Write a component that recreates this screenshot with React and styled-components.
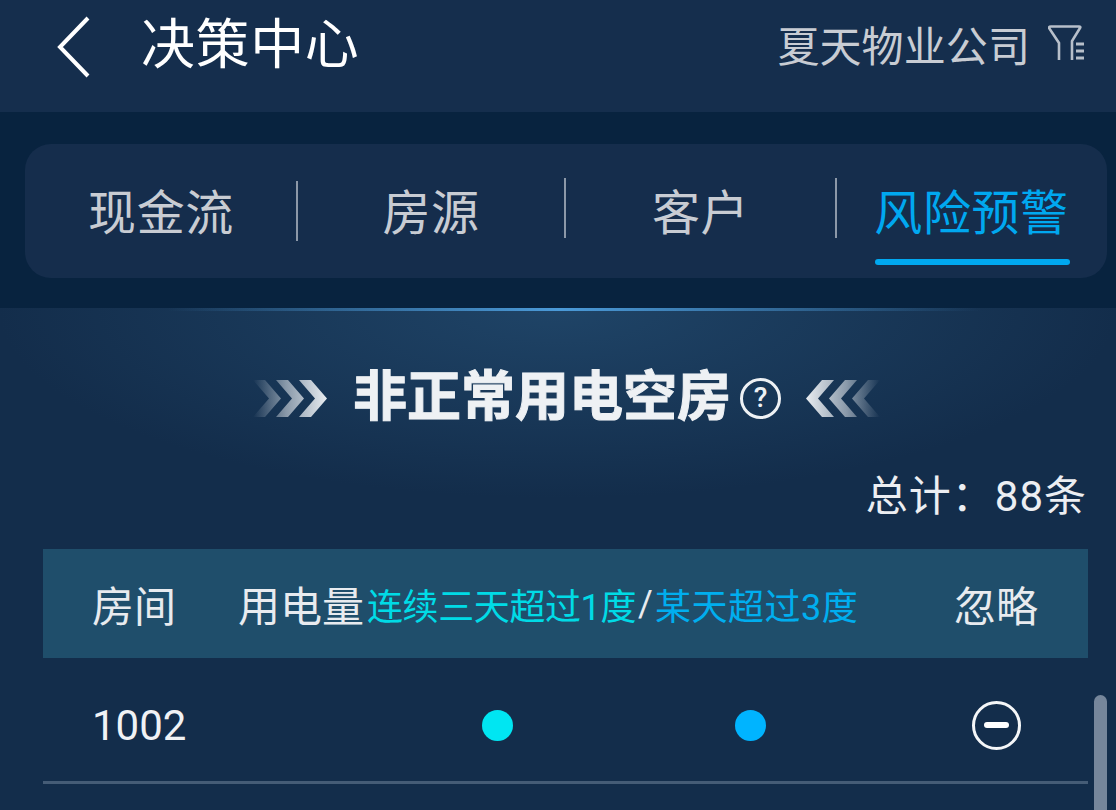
import React from 'react';
import styled, { createGlobalStyle } from 'styled-components';

const GlobalStyle = createGlobalStyle`
  html, body {
    margin: 0;
    padding: 0;
    background: #132d4b;
  }
  body {
    font-family: Roboto, "Noto Sans CJK SC", "Noto Sans", sans-serif;
    font-weight: 400;
  }
`;

const tabs = [
  { name: '现金流', width: 272, lineTop: 3 },
  { name: '房源', width: 268, lineTop: 0 },
  { name: '客户', width: 271, lineTop: 0 },
  { name: '风险预警', width: 271, active: true },
];

const Chevrons = ({ flip }) => {
  const id = flip ? 'fadeRight' : 'fadeLeft';
  return (
    <ChevronSvg viewBox="0 0 74 37" $flip={flip}>
      <defs>
        <linearGradient id={id} x1="0" x2="1" y1="0" y2="0">
          <stop offset="0" stopColor="#e8ecf0" stopOpacity="0" />
          <stop offset="0.45" stopColor="#e8ecf0" stopOpacity="0.55" />
          <stop offset="1" stopColor="#e8ecf0" stopOpacity="1" />
        </linearGradient>
      </defs>
      <path
        fill={`url(#${id})`}
        d="M0 0h12l16 18.5L12 37H0l16-18.5zM23 0h12l16 18.5L35 37H23l16-18.5zM46 0h12l16 18.5L58 37H46l16-18.5z"
      />
    </ChevronSvg>
  );
};

const App = () => {
  return (
    <Page>
      <GlobalStyle />
      <Header>
        <HeaderLeft>
          <svg width="36" height="64" viewBox="0 0 36 64" fill="none">
            <path d="M32 3 L4 32 L32 61" stroke="#fff" strokeWidth="4" />
          </svg>
          <Title>决策中心</Title>
        </HeaderLeft>
        <HeaderRight>
          <Company>夏天物业公司</Company>
          <FilterIcon viewBox="0 0 36 38" fill="none" stroke="#b7bfca" strokeWidth="2.6">
            <path d="M11 35 V18 L1 3 Q1 1.500 3 1.500 H31 Q33 1.500 32 3 L24 16 V35" />
            <path strokeWidth="3" d="M28 19 H36 M28 26 H36 M28 33 H36" />
          </FilterIcon>
        </HeaderRight>
      </Header>

      <TabBand>
        <TabCard>
          {tabs.map((tab) => (
            <Tab key={tab.name} $width={tab.width}>
              <TabLabel $active={tab.active}>{tab.name}</TabLabel>
              {!tab.active && <TabLine $top={tab.lineTop} />}
            </Tab>
          ))}
        </TabCard>
      </TabBand>

      <Panel>
        <SectionTitle>
          <Chevrons />
          <SectionText>非正常用电空房</SectionText>
          <Help>?</Help>
          <Chevrons flip />
        </SectionTitle>

        <Total>总计：88条</Total>

        <Table>
          <HeadRow>
            <RoomHead>房间</RoomHead>
            <UsageHead>
              用电量
              <Hint $color="#00dbe6" $left={3} $spacing={-0.4}>连续三天超过1度</Hint>
              <Slash>/</Slash>
              <Hint $color="#00aeef" $spacing={0.5}>某天超过3度</Hint>
            </UsageHead>
            <IgnoreHead>忽略</IgnoreHead>
          </HeadRow>
          <Row>
            <RoomCell>1002</RoomCell>
            <Dot $color="#00e6f2" />
            <Dot $color="#00b4ff" />
            <IgnoreButton />
          </Row>
        </Table>
        <ScrollThumb />
      </Panel>
    </Page>
  );
};

export default App;

const Page = styled.div`
  width: 1116px;
  height: 810px;
  overflow: hidden;
  display: flex;
  flex-direction: column;
  color: #fff;
`;

const Header = styled.div`
  height: 112px;
  flex: none;
  background: #152e4d;
  display: flex;
  align-items: center;
  justify-content: space-between;
  padding: 0 32px 18px 56px;
  box-sizing: border-box;
`;

const HeaderLeft = styled.div`
  display: flex;
  align-items: center;
  gap: 49px;
`;

const Title = styled.div`
  font-size: 54px;
  line-height: 64px;
  margin-top: -2px;
  letter-spacing: 0.6px;
  color: #fff;
`;

const HeaderRight = styled.div`
  display: flex;
  align-items: center;
  gap: 18px;
`;

const FilterIcon = styled.svg`
  width: 36px;
  height: 38px;
  margin-top: -6px;
`;

const Company = styled.div`
  font-size: 42px;
  line-height: 50px;
  margin-top: 2px;
  letter-spacing: 0.1px;
  color: #c8ccd3;
`;

const TabBand = styled.div`
  height: 196px;
  flex: none;
  box-sizing: border-box;
  background: #08233f;
  padding: 32px 9px 30px 25px;
`;

const TabCard = styled.div`
  height: 134px;
  border-radius: 26px;
  background: #152d4c;
  display: flex;
`;

const Tab = styled.div`
  position: relative;
  width: ${(p) => p.$width}px;
  display: flex;
  align-items: center;
  justify-content: center;
`;

const TabLabel = styled.div`
  position: relative;
  font-size: 48px;
  line-height: 60px;
  margin-top: 6px;
  letter-spacing: 0.6px;
  color: ${(p) => (p.$active ? '#00a8f0' : '#c8ccd3')};

  ${(p) =>
    p.$active &&
    `
    &::after {
      content: '';
      position: absolute;
      left: 1px;
      right: -1px;
      bottom: -21px;
      height: 6px;
      border-radius: 3px;
      background: #00a8f0;
    }
  `}
`;

const TabLine = styled.span`
  position: absolute;
  right: -1px;
  top: ${(p) => 34 + p.$top}px;
  width: 2px;
  height: 60px;
  background: #8c98a8;
`;

const Panel = styled.div`
  position: relative;
  flex: 1;
  box-sizing: border-box;
  padding: 0 28px 0 43px;
  background:
    linear-gradient(90deg, rgba(62, 140, 210, 0) 15%, #4b9ad8 50%, rgba(62, 140, 210, 0) 88%) top / 100% 3px no-repeat,
    radial-gradient(ellipse 560px 190px at 50% 0, #1f4467 0%, rgba(31, 68, 103, 0) 100%),
    #132d4b;
`;

const SectionTitle = styled.div`
  height: 64px;
  margin-top: 58px;
  padding-left: 2px;
  display: flex;
  align-items: center;
  justify-content: center;
`;

const ChevronSvg = styled.svg`
  width: 74px;
  height: 37px;
  transform: ${(p) => (p.$flip ? 'scaleX(-1)' : 'none')};
`;

const SectionText = styled.div`
  font-size: 54px;
  line-height: 64px;
  font-weight: 700;
  color: #eef1f4;
  margin-left: 26px;
  -webkit-text-stroke: 1px #eef1f4;
`;

const Help = styled.div`
  box-sizing: border-box;
  width: 41px;
  height: 41px;
  margin: 0 25px 0 9px;
  border: 3px solid #eef1f4;
  border-radius: 50%;
  display: flex;
  align-items: center;
  justify-content: center;
  font-size: 28px;
  line-height: 1;
  font-weight: 500;
  color: #eef1f4;
`;

const Total = styled.div`
  margin-top: 42px;
  padding-right: 1px;
  text-align: right;
  font-size: 42px;
  line-height: 50px;
  letter-spacing: 1px;
  color: #eceef2;
`;

const Table = styled.div`
  margin-top: 27px;
`;

const HeadRow = styled.div`
  height: 109px;
  box-sizing: border-box;
  background: #1f4e6b;
  padding: 0 50px 0 49px;
  display: flex;
  align-items: center;
  font-size: 42px;
  color: #e8ebef;
`;

const RoomHead = styled.div`
  width: 146px;
`;

const UsageHead = styled.div`
  flex: 1;
  display: flex;
  align-items: center;
`;

const Hint = styled.span`
  font-size: 36px;
  margin-left: ${(p) => p.$left || 0}px;
  letter-spacing: ${(p) => p.$spacing}px;
  color: ${(p) => p.$color};
`;

const Slash = styled.span`
  font-size: 36px;
  margin: 0 2px;
  color: #e8ebef;
`;

const IgnoreHead = styled.div``;

const Row = styled.div`
  height: 126px;
  box-sizing: border-box;
  padding-top: 11px;
  border-bottom: 3px solid #455c76;
  display: grid;
  grid-template-columns: 327px 254px 252px 1fr;
  align-items: center;
`;

const RoomCell = styled.div`
  padding-left: 49px;
  font-size: 42px;
  color: #f0f2f5;
`;

const Dot = styled.span`
  justify-self: center;
  width: 31px;
  height: 31px;
  border-radius: 50%;
  background: ${(p) => p.$color};
`;

const IgnoreButton = styled.span`
  position: relative;
  justify-self: end;
  margin-right: 67px;
  box-sizing: border-box;
  width: 49px;
  height: 49px;
  border: 3px solid #f4f6f8;
  border-radius: 50%;

  &::after {
    content: '';
    position: absolute;
    left: 9px;
    right: 9px;
    top: 18px;
    height: 6px;
    border-radius: 3px;
    background: #fff;
  }
`;

const ScrollThumb = styled.div`
  position: absolute;
  left: 1094px;
  top: 387px;
  width: 13px;
  height: 130px;
  border-radius: 7px;
  background: #76869b;
`;
